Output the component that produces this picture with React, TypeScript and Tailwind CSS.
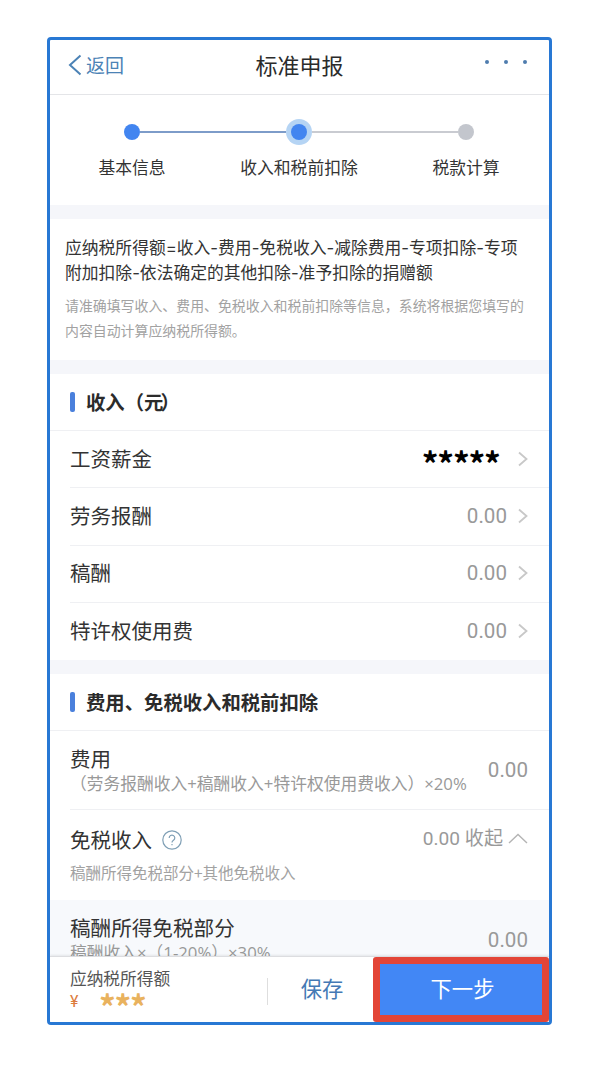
import React from 'react';

interface StepProps {
    label: string;
    state: 'done' | 'current' | 'todo';
    left: string;
    right: string;
}

interface IncomeItem {
    label: string;
    value: string;
    masked?: boolean;
}

const STEPS: StepProps[] = [
    { label: '基本信息', state: 'done', left: 'bg-transparent', right: 'bg-[#7d9cc9]' },
    { label: '收入和税前扣除', state: 'current', left: 'bg-[#7d9cc9]', right: 'bg-[#c9cbd1]' },
    { label: '税款计算', state: 'todo', left: 'bg-[#c9cbd1]', right: 'bg-transparent' },
];

const INCOME_ITEMS: IncomeItem[] = [
    { label: '工资薪金', value: '*****', masked: true },
    { label: '劳务报酬', value: '0.00' },
    { label: '稿酬', value: '0.00' },
    { label: '特许权使用费', value: '0.00' },
];

const Step: React.FC<StepProps> = ({ label, state, left, right }) => (
    <div className="w-[167px] shrink-0 flex flex-col items-center">
        <div className="w-full h-[26px] flex items-center">
            <div className={`flex-1 h-[1.5px] ${left}`} />
            {state === 'current' ? (
                <div className="size-[26px] rounded-full bg-[#b5d4f4] flex items-center justify-center">
                    <div className="size-4 rounded-full bg-[#4285f0]" />
                </div>
            ) : (
                <div className={`size-4 rounded-full ${state === 'done' ? 'bg-[#4285f0]' : 'bg-[#c3c6cd]'}`} />
            )}
            <div className={`flex-1 h-[1.5px] ${right}`} />
        </div>
        <span className="mt-[10px] text-[16.8px] leading-6 text-[#333]">{label}</span>
    </div>
);

const Band = () => <div className="h-[14px] shrink-0 bg-[#f5f6fa]" />;

const SectionTitle: React.FC<{ children: React.ReactNode }> = ({ children }) => (
    <div className="h-[57px] shrink-0 pl-5 flex items-center border-b border-[#eff0f3]">
        <div className="w-[5px] h-5 rounded-[2px] bg-[#4a80dc]" />
        <h2 className="ml-[11px] text-[19.35px] leading-7 font-bold text-[#2b2b2b]">{children}</h2>
    </div>
);

const Amount: React.FC<{ children: React.ReactNode }> = ({ children }) => (
    <span className="font-['Roboto','Noto_Sans_CJK_SC',sans-serif] text-[20.6px] leading-7 text-[#999]">{children}</span>
);

const ChevronRight = () => (
    <svg width="10" height="16" viewBox="0 0 10 16" fill="none" stroke="#c8c8c8" strokeWidth="1.8">
        <path d="M1 1.500 8.500 8 1 14.500" />
    </svg>
);

const IncomeRow: React.FC<{ item: IncomeItem; last: boolean }> = ({ item, last }) => (
    <div className={`ml-5 h-[57.25px] pr-[21px] flex items-center border-[#eff0f3] ${last ? '' : 'border-b'}`}>
        <span className="pb-[3px] text-[20.5px] leading-7 text-[#333]">{item.label}</span>
        <div className="ml-auto pb-px flex items-center">
            {item.masked ? (
                <span className="mr-[18.500px] pt-[9px] text-[33px] leading-10 font-bold tracking-[-1.2px] text-black">{item.value}</span>
            ) : (
                <span className="mr-[11px] flex"><Amount>{item.value}</Amount></span>
            )}
            <ChevronRight />
        </div>
    </div>
);

const App: React.FC = () => {
    return (
        <div className="w-[606px] h-[1069px] bg-white pt-[37px] pl-[47px] font-['Noto_Sans_CJK_SC',sans-serif]">
            <div className="w-[505px] h-[988px] border-3 border-[#2878d4] rounded-[4px] bg-white flex flex-col overflow-hidden">
                <header className="h-[55px] shrink-0 px-[18px] grid grid-cols-3 items-center border-b border-[#e4e5e8]">
                    <div className="pb-1 flex items-center text-[#4c83b6]">
                        <svg width="14" height="22" viewBox="0 0 14 22" fill="none" stroke="currentColor" strokeWidth="2">
                            <path d="M12.500 1.500 2 11l10.500 9.500" />
                        </svg>
                        <span className="ml-1 text-[19px] leading-7">返回</span>
                    </div>
                    <h1 className="pb-[6px] text-center text-[22px] leading-8 whitespace-nowrap text-[#2b2b2b]">标准申报</h1>
                    <div className="pr-1 pb-[10px] flex justify-end gap-[15px]">
                        <i className="size-1 rounded-full bg-[#4f7cae]" />
                        <i className="size-1 rounded-full bg-[#4f7cae]" />
                        <i className="size-1 rounded-full bg-[#4f7cae]" />
                    </div>
                </header>

                <section className="h-[110px] shrink-0 pt-6 pr-px flex justify-center">
                    {STEPS.map(step => (
                        <Step key={step.label} {...step} />
                    ))}
                </section>

                <Band />

                <section className="h-[141px] shrink-0 pt-[16.500px] pl-[15px] whitespace-nowrap">
                    <p className="font-['Inter','Noto_Sans_CJK_SC',sans-serif] text-[16.8px] leading-[25.5px] text-[#333]">
                        应纳税所得额=收入-费用-免税收入-减除费用-专项扣除-专项
                        <br />
                        附加扣除-依法确定的其他扣除-准予扣除的捐赠额
                    </p>
                    <p className="mt-[6px] text-[13.92px] leading-[25.4px] text-[#a2a2a2]">
                        请准确填写收入、费用、免税收入和税前扣除等信息，系统将根据您填写的
                        <br />
                        内容自动计算应纳税所得额。
                    </p>
                </section>

                <Band />

                <SectionTitle>收入（元<span className="-ml-[3px]">）</span></SectionTitle>
                <section className="h-[229px] shrink-0">
                    {INCOME_ITEMS.map((item, i) => (
                        <IncomeRow key={item.label} item={item} last={i === INCOME_ITEMS.length - 1} />
                    ))}
                </section>

                <Band />

                <SectionTitle>费用、免税收入和税前扣除</SectionTitle>
                <section className="ml-5 h-[79px] shrink-0 pr-[21px] flex items-center justify-between border-b border-[#eff0f3]">
                    <div className="pb-px flex flex-col whitespace-nowrap">
                        <span className="text-[20.5px] leading-7 text-[#333]">费用</span>
                        <span className="font-['Open_Sans','Noto_Sans_CJK_SC',sans-serif] text-[16.75px] leading-6 text-[#999]">（劳务报酬收入+稿酬收入+特许权使用费收入）×20%</span>
                    </div>
                    <Amount>0.00</Amount>
                </section>
                <section className="ml-5 h-[90px] shrink-0 pt-[15px] pr-[21px]">
                    <div className="flex items-center">
                        <span className="text-[20.5px] leading-7 text-[#333]">免税收入</span>
                        <svg className="mt-px ml-[10px]" width="20" height="20" viewBox="0 0 20 20" fill="none" stroke="#7f9fb5" strokeWidth="1.2">
                            <circle cx="10" cy="10" r="9.200" />
                            <path d="M7.200 8a2.800 2.800 0 1 1 4.300 2.300c-1 .7-1.500 1.100-1.500 2.200" />
                            <path d="M10 14v1.300" />
                        </svg>
                        <div className="ml-auto flex items-center text-[#999]">
                            <span className="font-['Roboto','Noto_Sans_CJK_SC',sans-serif] text-[19.1px] leading-7">0.00 收起</span>
                            <svg className="ml-[5px] mb-px" width="20" height="11" viewBox="0 0 20 11" fill="none" stroke="#b4b4b4" strokeWidth="1.4">
                                <path d="m1 10 9-8.500 9 8.500" />
                            </svg>
                        </div>
                    </div>
                    <p className="mt-[7px] text-[15.5px] leading-6 text-[#a2a2a2]">稿酬所得免税部分+其他免税收入</p>
                </section>
                <section className="h-[56px] shrink-0 pl-5 pr-[21px] flex justify-between bg-[#f7f9fc] overflow-hidden">
                    <div className="pt-[13px] flex flex-col whitespace-nowrap">
                        <span className="text-[20.6px] leading-7 text-[#333]">稿酬所得免税部分</span>
                        <span className="font-['Open_Sans','Noto_Sans_CJK_SC',sans-serif] text-[16.75px] leading-6 text-[#999]">稿酬收入×（1-20%）×30%</span>
                    </div>
                    <span className="pt-[26px]"><Amount>0.00</Amount></span>
                </section>

                <footer className="flex-1 flex border-t border-[#dcdde0] shadow-[0_-1px_2px_rgba(0,0,0,0.08)] bg-white">
                    <div className="w-[217px] pl-5 pt-[9px]">
                        <div className="text-[16.7px] leading-6 text-[#555]">应纳税所得额</div>
                        <div className="h-6 flex items-center">
                            <span className="w-[29px] font-['Roboto','Noto_Sans_CJK_SC',sans-serif] text-[16px] leading-5 text-[#dc7b3c]">¥</span>
                            <span className="pt-[7px] text-[33px] leading-6 font-bold tracking-[-1.2px] text-[#e9b25e]">***</span>
                        </div>
                    </div>
                    <div className="mt-[21px] w-px h-[27px] bg-[#dedede]" />
                    <button className="flex-1 pl-[3px] pb-[3px] text-[21.3px] leading-8 text-[#4479b5]">保存</button>
                    <button className="w-[176px] pl-[3px] pb-[3px] border-7 border-[#e34537] rounded-[3px] bg-[#4287f5] text-[21.3px] leading-8 text-white">下一步</button>
                </footer>
            </div>
        </div>
    );
};

export default App;
